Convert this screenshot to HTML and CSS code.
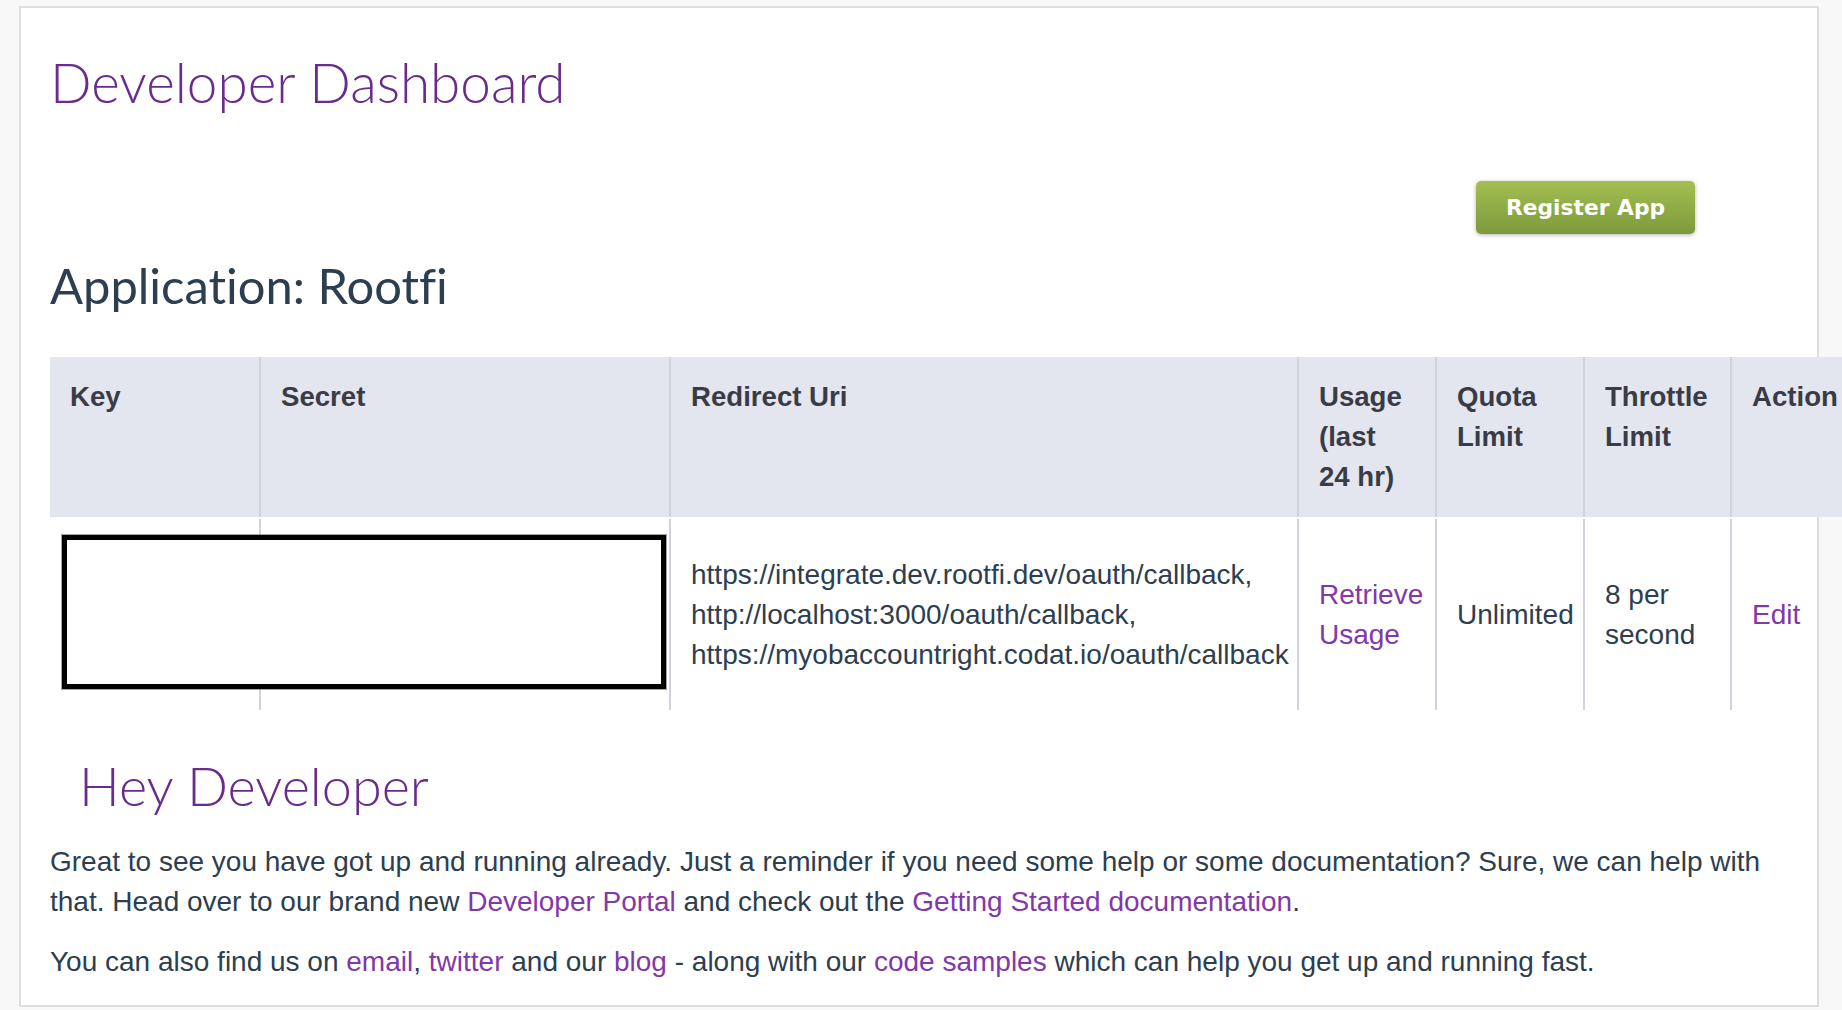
FILE: index.html
```html
<!DOCTYPE html>
<html lang="en">
<head>
<meta charset="utf-8">
<title>Developer Dashboard</title>
<link rel="stylesheet" href="styles.css">
</head>
<body>
<div class="card">
  <h1 class="page-title">Developer Dashboard</h1>
  <div class="actions">
    <a class="btn-register" href="#">Register App</a>
  </div>
  <h2 class="app-title">Application: Rootfi</h2>

  <div class="app-table" role="table">
    <div class="cell th first" role="columnheader">Key</div>
    <div class="cell th" role="columnheader">Secret</div>
    <div class="cell th" role="columnheader">Redirect Uri</div>
    <div class="cell th th-usage" role="columnheader">Usage (last 24 hr)</div>
    <div class="cell th" role="columnheader">Quota Limit</div>
    <div class="cell th" role="columnheader">Throttle Limit</div>
    <div class="cell th" role="columnheader">Action</div>

    <div class="cell td first" role="cell"></div>
    <div class="cell td" role="cell"></div>
    <div class="cell td uris" role="cell"><span>https://integrate.dev.rootfi.dev/oauth/callback,<br>http://localhost:3000/oauth/callback,<br>https://myobaccountright.codat.io/oauth/callback</span></div>
    <div class="cell td" role="cell"><a class="link" href="#">Retrieve Usage</a></div>
    <div class="cell td" role="cell">Unlimited</div>
    <div class="cell td" role="cell">8 per second</div>
    <div class="cell td" role="cell"><a class="link" href="#">Edit</a></div>

    <div class="redact" aria-hidden="true"></div>
  </div>

  <div class="welcome">
    <h1 class="hey">Hey Developer</h1>
    <p class="para">Great to see you have got up and running already. Just a reminder if you need some help or some documentation? Sure, we can help with that. Head over to our brand new <a class="link" href="#">Developer Portal</a> and check out the <a class="link" href="#">Getting Started documentation</a>.</p>
    <p class="para para-2">You can also find us on <a class="link" href="#">email</a>, <a class="link" href="#">twitter</a> and our <a class="link" href="#">blog</a> - along with our <a class="link" href="#">code samples</a> which can help you get up and running fast.</p>
  </div>
</div>
</body>
</html>
```

FILE: styles.css
```css
html, body {
  margin: 0;
  padding: 0;
  overflow-x: hidden;
  background: #f8f8f8;
}

body {
  padding: 6px 0 0 19px;
  font-family: "Liberation Sans", Arial, Helvetica, sans-serif;
  font-size: 28px;
  line-height: 40px;
  color: #2c3e50;
}

.card {
  width: 1800px;
  box-sizing: border-box;
  background: #ffffff;
  border: 2px solid #dedede;
  padding: 0 29px 23px 29px;
}

.page-title {
  margin: 42px 0 0 0;
  font-family: Lato, "Open Sans", sans-serif;
  font-weight: 300;
  font-size: 54.8px;
  line-height: 64px;
  color: #692b8c;
  font-variant-ligatures: none;
}

.actions {
  margin-top: 67px;
  display: flex;
  justify-content: flex-end;
  padding-right: 93px;
}

.btn-register {
  width: 219px;
  height: 53px;
  display: flex;
  align-items: center;
  justify-content: center;
  font-family: "DejaVu Sans", Verdana, sans-serif;
  font-weight: bold;
  font-size: 21.8px;
  line-height: normal;
  color: #ffffff;
  text-decoration: none;
  background: linear-gradient(#a3bf52, #7d993c);
  border-radius: 5px;
  box-shadow: 0 1px 4px rgba(0, 0, 0, 0.3);
}

.app-title {
  margin: 23px 0 0 0;
  font-family: Lato, "Open Sans", sans-serif;
  font-weight: 400;
  font-size: 48.9px;
  line-height: 56px;
  color: #2c3e50;
  font-variant-ligatures: none;
}

.app-table {
  position: relative;
  margin-top: 44px;
  width: 1806px;
  display: grid;
  grid-template-columns: 209px 410px 628px 138px 148px 147px 126px;
  row-gap: 2px;
}

.cell {
  box-sizing: border-box;
  border-left: 2px solid #cfd3db;
}

.cell.first {
  border-left: 0;
}

.th {
  background: #e3e6ee;
  padding: 20px;
  font-size: 27.6px;
  font-weight: bold;
  color: #393c47;
}

.th-usage {
  padding-right: 24px;
}

.td {
  padding: 36px 20px 35px 20px;
  display: flex;
  flex-direction: column;
  justify-content: center;
  color: #2c3e50;
}

.uris {
  white-space: nowrap;
}

.link {
  color: #8237aa;
  text-decoration: none;
}

.redact {
  position: absolute;
  left: 12px;
  top: 178px;
  width: 604px;
  height: 154px;
  box-sizing: border-box;
  border: 5px solid #000000;
  background: #ffffff;
  box-shadow: 0 0 0 1px rgba(0, 0, 0, 0.35);
}

.welcome {
  margin-top: 43px;
}

.hey {
  margin: 0;
  padding-left: 29px;
  font-family: Lato, "Open Sans", sans-serif;
  font-weight: 300;
  font-size: 54px;
  line-height: 66px;
  color: #692b8c;
}

.para {
  margin: 23px 0 0 0;
}

.para-2 {
  margin-top: 20px;
}

.para-2 + * {
  margin-bottom: 0;
}
```
